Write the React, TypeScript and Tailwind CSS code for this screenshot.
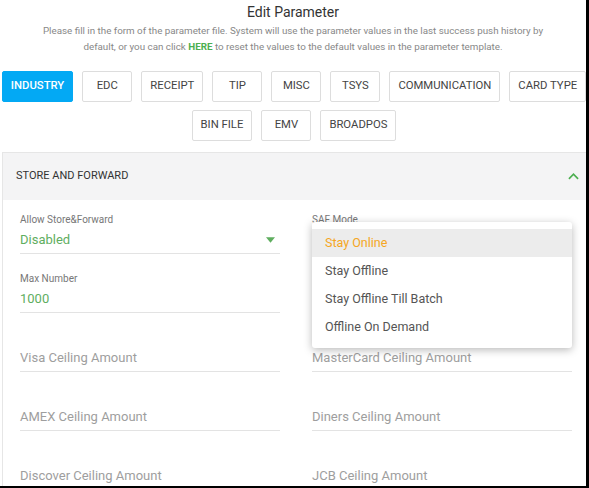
const tabs = ['INDUSTRY', 'EDC', 'RECEIPT', 'TIP', 'MISC', 'TSYS', 'COMMUNICATION', 'CARD TYPE', 'BIN FILE', 'EMV', 'BROADPOS'];

const modes = ['Stay Online', 'Stay Offline', 'Stay Offline Till Batch', 'Offline On Demand'];

function Field({ label, value, placeholder, select, children }: {
  label?: string;
  value?: string;
  placeholder?: string;
  select?: boolean;
  children?: React.ReactNode;
}) {
  return (
    <div className="relative mb-[18px]">
      <div className="h-[14px] text-[10px] leading-[14px] text-[#777]">{label}</div>
      <div className="flex h-[27px] items-center justify-between border-b border-[#e3e3e3]">
        {value ? (
          <span className="text-[13px] text-[#5fae5f]">{value}</span>
        ) : (
          <span className="text-[13px] text-[#9e9e9e]">{placeholder}</span>
        )}
        {select && (
          <svg className="mr-[5px] h-[6px] w-[9px]" viewBox="0 0 10 6">
            <path d="M0 0h10L5 6z" fill="#5fae5f" />
          </svg>
        )}
      </div>
      {children}
    </div>
  );
}

export default function App() {
  return (
    <div className="h-[488px] w-[589px] overflow-hidden bg-black" style={{ fontFamily: 'Roboto, "Noto Sans", sans-serif' }}>
      <div className="h-[486px] w-[586px] overflow-hidden bg-white">
        <div className="pt-[3px] text-center text-[14px] leading-[18px] text-[#333]">Edit Parameter</div>
        <p className="mx-auto mt-[2px] w-[510px] text-center text-[9.8px] leading-[16px] text-[#888]">
          Please fill in the form of the parameter file. System will use the parameter values in the last success push history by
          default, or you can click <span className="font-bold text-[#4caf50]">HERE</span> to reset the values to the default values in the parameter template.
        </p>

        <div className="mt-[16px] flex w-[588px] flex-wrap justify-center gap-x-[9px] gap-y-[8px]">
          {tabs.map((t, i) => (
            <button
              key={t}
              className={
                i === 0
                  ? 'h-[31px] min-w-[50px] rounded-[2px] border border-[#03a9f4] bg-[#03a9f4] px-[8px] text-[11.3px] font-medium text-white'
                  : 'h-[31px] min-w-[50px] rounded-[2px] border border-[#dddddd] bg-white px-[8px] text-[11.3px] text-[#444]'
              }
            >
              {t}
            </button>
          ))}
        </div>

        <div className="ml-[2px] mt-[11px] w-[588px] border border-[#e6e6e6]">
          <div className="flex h-[47px] items-center justify-between bg-[#f4f4f5] pl-[13px] pr-[10px]">
            <span className="text-[11px] text-[#333]">STORE AND FORWARD</span>
            <svg className="h-[7px] w-[11px]" viewBox="0 0 12 7" fill="none">
              <path d="M1 6l5-5 5 5" stroke="#4caf50" strokeWidth="1.8" />
            </svg>
          </div>

          <div className="grid grid-cols-2 gap-x-[32px] px-[17px] pt-[13px]">
            <div>
              <Field label="Allow Store&Forward" value="Disabled" select />
              <Field label="Max Number" value="1000" />
              <Field placeholder="Visa Ceiling Amount" />
              <Field placeholder="AMEX Ceiling Amount" />
              <Field placeholder="Discover Ceiling Amount" />
            </div>
            <div>
              <Field label="SAF Mode">
                <div className="absolute left-0 right-0 top-[9px] z-10 rounded-[3px] bg-white py-[7px] shadow-[0_2px_8px_rgba(0,0,0,0.28)]">
                  {modes.map((m, i) => (
                    <div
                      key={m}
                      className={
                        i === 0
                          ? 'flex h-[28px] items-center bg-[#ececec] pl-[13px] text-[12.5px] text-[#f5a623]'
                          : 'flex h-[28px] items-center pl-[13px] text-[12.5px] text-[#555]'
                      }
                    >
                      {m}
                    </div>
                  ))}
                </div>
              </Field>
              <Field label=" " value="" placeholder="" />
              <Field placeholder="MasterCard Ceiling Amount" />
              <Field placeholder="Diners Ceiling Amount" />
              <Field placeholder="JCB Ceiling Amount" />
            </div>
          </div>
        </div>
      </div>
    </div>
  );
}
